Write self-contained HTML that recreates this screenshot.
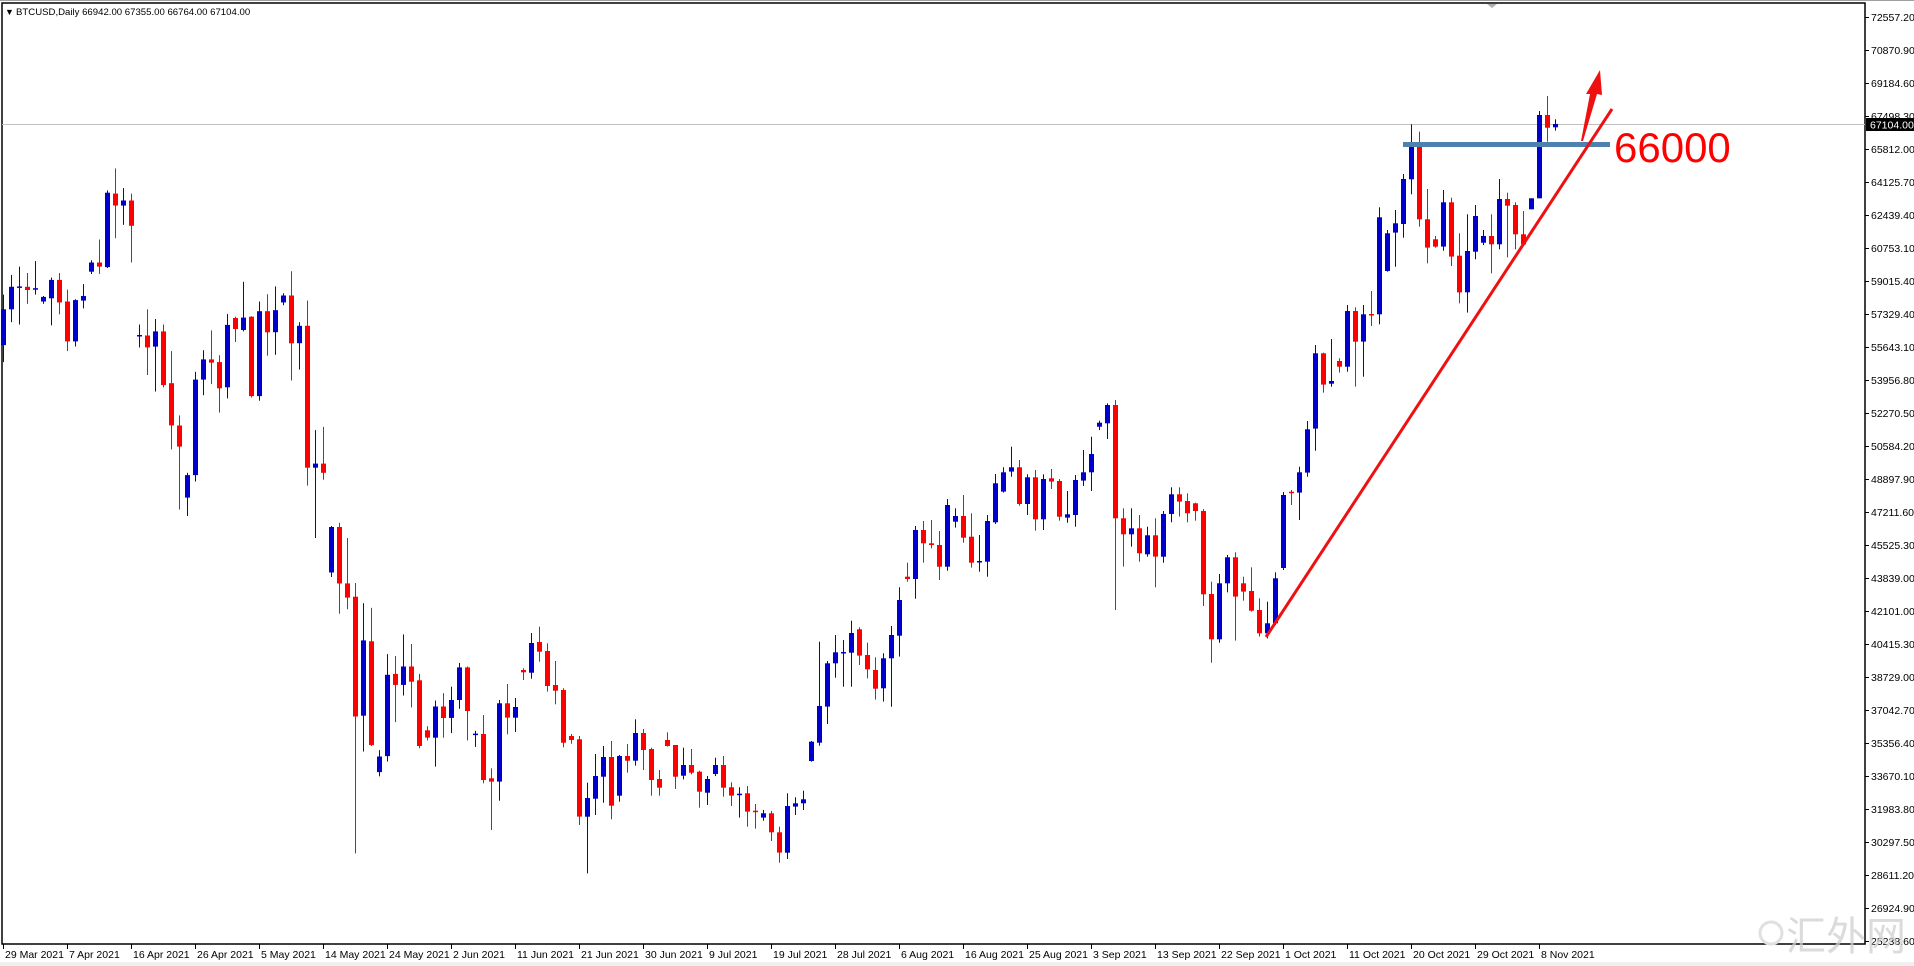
<!DOCTYPE html>
<html><head><meta charset="utf-8">
<style>
html,body{margin:0;padding:0;background:#fff;}
body{width:1914px;height:966px;overflow:hidden;position:relative;font-family:"Liberation Sans",Tahoma,sans-serif;}
svg{position:absolute;left:0;top:0;}
</style></head>
<body>
<svg id="c" width="1914" height="966" xmlns="http://www.w3.org/2000/svg">
<rect x="0" y="0" width="1914" height="966" fill="#fff"/>
<rect x="0" y="962" width="1914" height="4" fill="#f0f0f0"/>
<line x1="0" y1="0.5" x2="1914" y2="0.5" stroke="#a0a0a0"/>
<rect x="2" y="3" width="1863" height="941" fill="none" stroke="#000" stroke-width="1.5"/>
<polygon points="1487,4 1497,4 1492,8" fill="#b0b0b0"/>
<text x="5" y="15" font-size="9" fill="#000">▼</text>
<text x="16" y="15" font-size="9.6" fill="#000">BTCUSD,Daily  66942.00 67355.00 66764.00 67104.00</text>
<line x1="2" y1="124.5" x2="1865" y2="124.5" stroke="#c0c0c0" stroke-width="1"/>
<g id="candles"></g>
<g id="axes" font-size="10.5" fill="#000"></g>
<rect x="1403" y="142" width="207" height="5" fill="#4f81b0"/>
<line x1="1266" y1="637" x2="1612" y2="109" stroke="#ee1111" stroke-width="3"/>
<polygon points="1581,141 1590,94 1586,94 1600,70 1602,95 1597,94 1583,141" fill="#ee1111"/>
<text x="1614" y="162" font-size="42" fill="#ff0000">66000</text>
<rect x="1866" y="118" width="48" height="13" fill="#000"/>
<text x="1870" y="128.5" font-size="10.5" fill="#fff">67104.00</text>
<circle cx="1771" cy="933" r="11" fill="none" stroke="#e0e0e0" stroke-width="3"/>
<text x="1786" y="950" font-size="40" fill="#cfcfcf" fill-opacity="0.75" font-family="'Noto Sans CJK SC','WenQuanYi Zen Hei',sans-serif">汇外网</text>
</svg>
<script>
var g=document.getElementById("candles");
var Z3=[[425,347,315,462],[347,298,272,375],[299,297,254,380],[298,305,268,335],[303,301,242,315],[330,320,318,335],[323,283,278,382],[283,332,268,358],[330,417,304,438],[417,327,325,428],[328,318,292,345],[265,245,240,270],[245,254,195,270],[255,93,88,257],[95,121,40,192],[121,110,83,163],[110,165,95,245],[405,403,380,430],[404,430,347,490],[428,395,368,526],[395,512,380,517],[508,600,438,652],[600,646,578,783],[757,708,703,797],[708,500,483,722],[500,456,436,534],[456,463,393,510],[462,519,447,572],[517,381,357,541],[366,390,363,418],[392,365,287,395],[363,536,362,539],[536,351,330,546],[351,397,314,448],[397,349,297,446],[332,317,312,338],[317,421,264,502],[421,383,375,478],[383,692,328,731],[692,683,610,845],[683,703,603,718],[920,821,819,930],[821,944,812,1010],[944,975,845,1000],[973,1234,943,1532],[1232,1068,987,1310],[1070,1296,997,1298],[1355,1321,1307,1364],[1320,1143,1098,1332],[1141,1165,1102,1246],[1165,1125,1055,1188],[1125,1158,1076,1214],[1155,1298,1141,1303],[1264,1280,1255,1286],[1280,1212,1199,1343],[1212,1237,1183,1280],[1237,1198,1169,1270],[1198,1127,1117,1217],[1127,1222,1125,1286],[1273,1271,1265,1300]];
var Z4=[[522,660,465,670],[655,665,625,810],[665,430,420,722],[430,473,372,523],[473,441,414,516],[330,337,325,360],[338,249,219,356],[246,275,200,305],[273,378,250,395],[375,392,303,433],[390,548,385,562],[528,540,522,551],[538,770,528,795],[770,714,668,940],[716,648,582,765],[650,591,558,728],[591,737,543,778],[707,588,585,725],[588,602,552,638],[602,519,478,617],[519,570,507,630],[567,660,563,707],[657,683,630,707],[540,558,517,560],[555,650,555,687],[647,615,563,658],[615,638,567,643],[635,695,632,743],[698,657,648,735],[642,615,593,648],[615,683,588,710],[682,707,667,738],[703,701,682,773],[700,755,678,800],[752,754,732,806],[773,760,750,782],[760,817,753,843],[817,878,800,908],[878,738,700,897],[740,730,712,765],[730,718,692,750],[603,545,543,605],[548,438,245,557],[440,310,303,492],[310,277,225,353],[278,276,240,380],[278,219,182,380],[208,287,202,315],[285,328,248,355],[330,386,292,419]];
var Z5=[[925,835,820,965],[835,765,738,980],[767,660,622,830],[590,597,548,605],[597,450,438,656],[450,490,423,548],[490,495,420,505],[495,560,453,600],[560,375,357,572],[425,408,385,443],[408,473,345,488],[470,548,400,563],[545,543,465,575],[545,423,405,590],[427,310,282,432],[335,277,262,338],[275,262,200,290],[262,372,240,377],[372,292,283,405],[292,418,270,452],[418,297,283,450],[295,305,267,327],[303,410,297,422],[413,403,333,428],[405,300,285,440],[302,277,210,318],[277,222,170,333],[140,128,122,150],[130,75,70,177],[75,415,60,690],[415,463,385,560],[463,445,385,500],[445,520,405,545],[523,466,440,530],[466,530,415,622],[530,402,393,548],[402,343,322,427],[343,365,322,410],[363,400,340,427],[370,393,368,422],[393,643,387,678],[642,778,605,848],[778,610,582,788],[610,532,525,637],[532,650,517,782],[610,635,590,662],[633,692,562,695],[690,760,655,770],[760,730,665,775],[730,595,577,735]];
var Z6=[[1434,1215,1206,1440],[1205,1208,1200,1245],[1208,1147,1130,1290],[1148,1018,993,1160],[1016,790,765,1082],[790,884,788,908],[881,873,747,890],[813,830,805,848],[830,663,645,845],[663,755,652,890],[755,673,645,860],[672,674,603,708],[673,382,352,703],[543,430,420,545],[428,400,360,530],[402,267,252,443],[268,163,103,313],[163,388,125,410],[388,473,297,520],[448,470,438,473],[470,337,300,482],[337,500,323,528],[497,607,430,640],[607,483,373,668],[485,378,345,508],[458,438,420,465],[438,463,373,550],[463,327,267,478],[327,347,308,502],[345,433,337,478],[433,463,363,468],[358,325,325,358],[325,75,63,325],[75,113,18,155],[112,102,88,122]];
var all=[];
function add(arr,off,sc){arr.forEach(function(c){all.push(c.map(function(v){return off+v/sc;}));});}
add(Z3,150,2.178);add(Z4,560,3);add(Z5,380,3);add(Z6,90,3);
var h="";
all.forEach(function(c,i){
 var xc=3+8*i,o=c[0],cl=c[1],hi=c[2],lo=c[3];
 var up=cl<=o,col=up?"#0000cc":"#ff0000";
 var t=Math.min(o,cl),b=Math.max(o,cl);if(b-t<1.5){b=t+1.5;}
 h+='<rect x="'+xc+'" y="'+hi.toFixed(1)+'" width="1" height="'+(lo-hi).toFixed(1)+'" fill="'+col+'"/>';
 h+='<rect x="'+(xc-2)+'" y="'+t.toFixed(1)+'" width="5" height="'+(b-t).toFixed(1)+'" fill="'+col+'"/>';
});
g.innerHTML=h;
var ax=document.getElementById("axes");
var P=["72557.20","70870.90","69184.60","67498.30","65812.00","64125.70","62439.40","60753.10","59015.40","57329.40","55643.10","53956.80","52270.50","50584.20","48897.90","47211.60","45525.30","43839.00","42101.00","40415.30","38729.00","37042.70","35356.40","33670.10","31983.80","30297.50","28611.20","26924.90","25238.60"];
var a="";
P.forEach(function(p,i){var y=17+33*i;a+='<line x1="1865" y1="'+(y+0.5)+'" x2="1869" y2="'+(y+0.5)+'" stroke="#000"/><text x="1871" y="'+(y+4)+'">'+p+'</text>';});
var D=["29 Mar 2021","7 Apr 2021","16 Apr 2021","26 Apr 2021","5 May 2021","14 May 2021","24 May 2021","2 Jun 2021","11 Jun 2021","21 Jun 2021","30 Jun 2021","9 Jul 2021","19 Jul 2021","28 Jul 2021","6 Aug 2021","16 Aug 2021","25 Aug 2021","3 Sep 2021","13 Sep 2021","22 Sep 2021","1 Oct 2021","11 Oct 2021","20 Oct 2021","29 Oct 2021","8 Nov 2021"];
D.forEach(function(d,i){var x=3+64*i;a+='<line x1="'+(x+0.5)+'" y1="944" x2="'+(x+0.5)+'" y2="949" stroke="#000"/><text x="'+(x+2)+'" y="958">'+d+'</text>';});
ax.innerHTML=a;
</script>
</body></html>
